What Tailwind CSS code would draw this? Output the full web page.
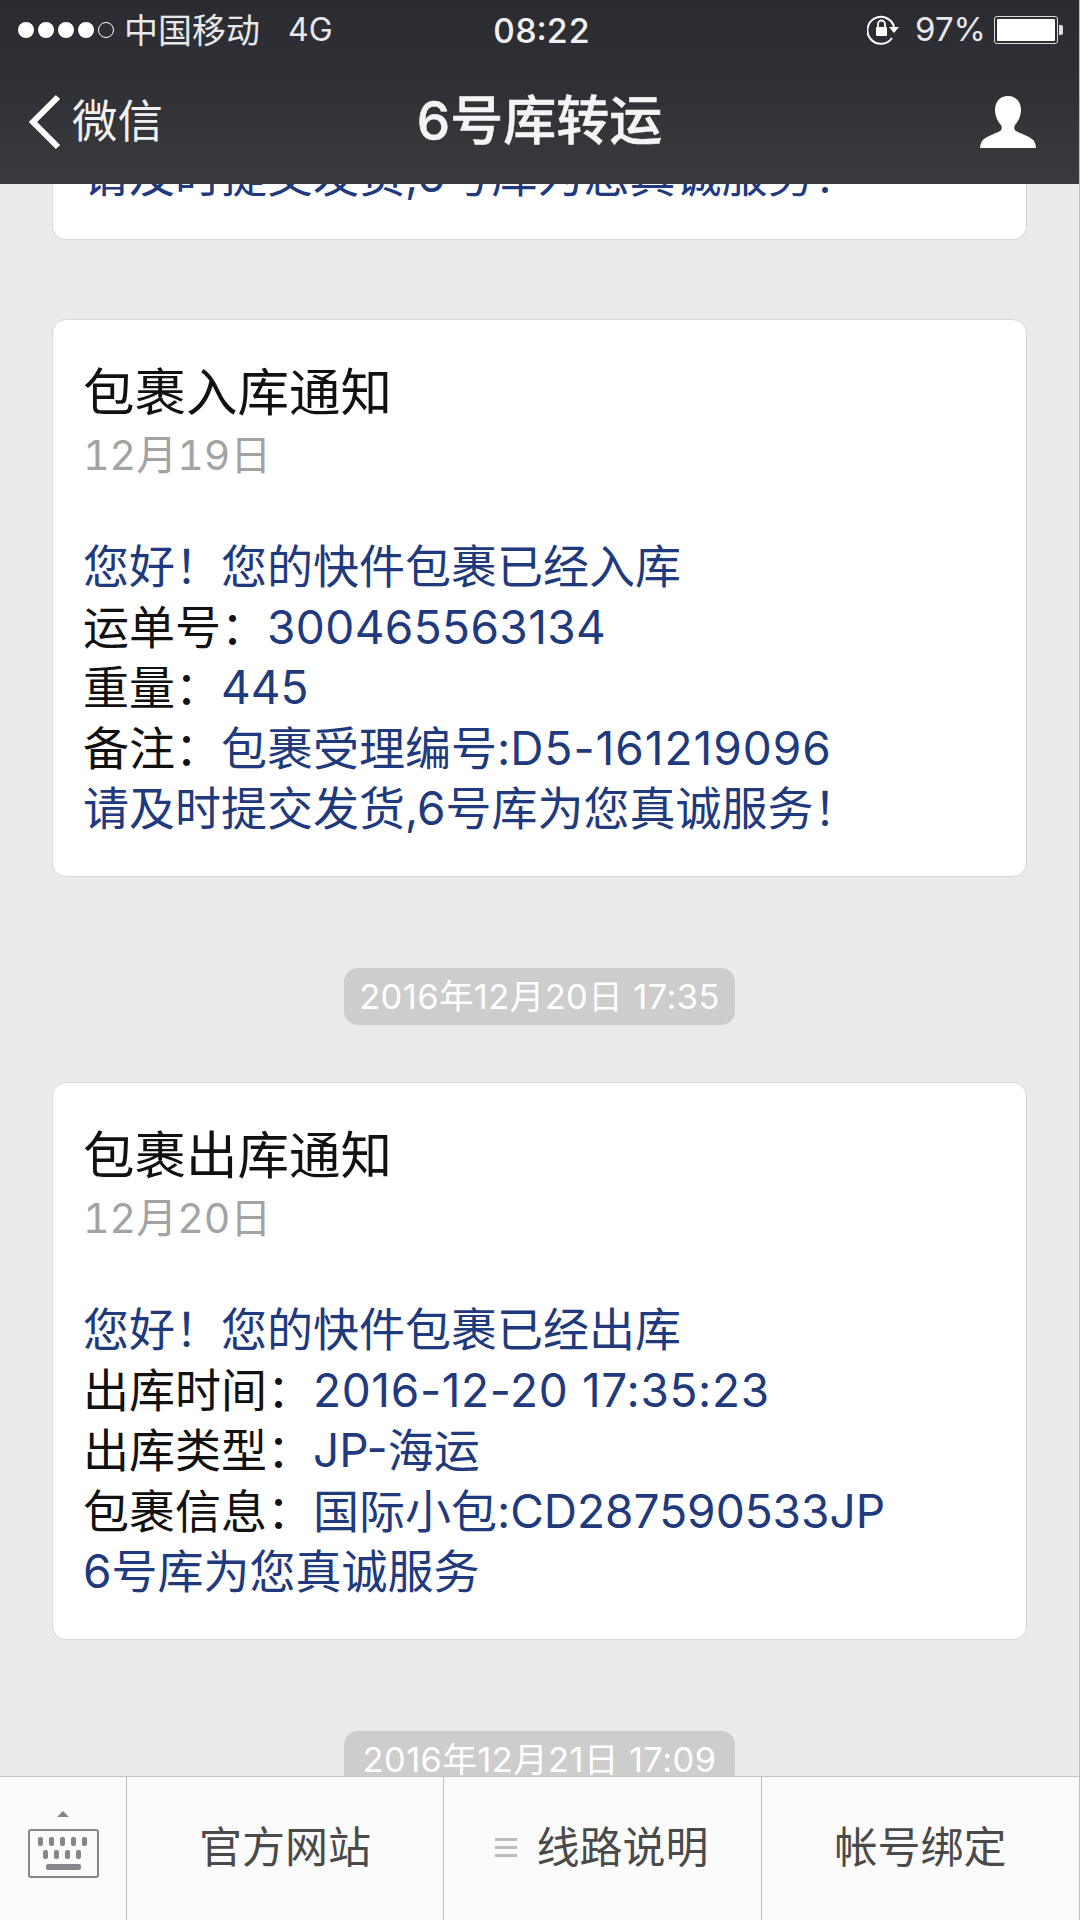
<!DOCTYPE html>
<html lang="zh-CN">
<head>
    <meta charset="UTF-8">
    <title>6号库转运</title>
    <script src="https://cdn.jsdelivr.net/npm/@tailwindcss/browser@4"></script>
</head>
<body class="bg-[#ebebeb] font-['Inter','Noto_Sans_CJK_SC',sans-serif]">
<div class="w-[1080px] h-[1920px] flex flex-col overflow-hidden border-r border-[#bdbdbd]">

    <!-- Status bar + nav -->
    <header class="h-[184px] shrink-0 bg-gradient-to-b from-[#2b2c31] via-[#303136] to-[#3a3a3e] text-white z-10 relative">
        <div class="h-[60px] flex items-center justify-between pl-[18px] pr-[16px]">
            <div class="flex items-center w-[420px] text-[34px] text-[#e8e8ea]">
                <div class="flex items-center gap-[4px]">
                    <span class="w-[16px] h-[16px] rounded-full bg-white"></span>
                    <span class="w-[16px] h-[16px] rounded-full bg-white"></span>
                    <span class="w-[16px] h-[16px] rounded-full bg-white"></span>
                    <span class="w-[16px] h-[16px] rounded-full bg-white"></span>
                    <span class="w-[16px] h-[16px] rounded-full border border-white"></span>
                </div>
                <span class="ml-[10px]">中国移动</span>
                <span class="ml-[28px] text-[32px]">4G</span>
            </div>
            <div class="text-[34px] font-medium tabular-nums text-[#f2f2f2] absolute left-[493px]">08:22</div>
            <div class="flex items-center text-[33px] text-[#e8e8ea]">
                <svg class="w-[34px] h-[32px]" viewBox="0 0 34 32" fill="none">
                    <path d="M25 24a13.500 13.500 0 1 1 2-11" stroke="#fff" stroke-width="2"/>
                    <path d="M22 13h10l-5 6z" fill="#fff"/>
                    <rect x="9" y="13" width="11" height="9" rx="1" fill="#fff"/>
                    <path d="M11 13v-3a3.500 3.500 0 0 1 7 0v3" stroke="#fff" stroke-width="1.800"/>
                </svg>
                <span class="ml-[14px]">97%</span>
                <div class="ml-[8px] w-[64px] h-[28px] border border-[#ddd] rounded-[3px] p-[2px]">
                    <div class="w-full h-full bg-white rounded-[1px]"></div>
                </div>
                <div class="w-[4px] h-[10px] bg-[#ddd] rounded-r-[2px] ml-[1px]"></div>
            </div>
        </div>
        <div class="h-[124px] flex items-center relative">
            <svg class="ml-[28px] w-[34px] h-[56px] shrink-0" viewBox="0 0 34 56" fill="none">
                <path d="M30 3 L5 28 L30 53" stroke="#fff" stroke-width="6"/>
            </svg>
            <span class="ml-[10px] text-[45.500px] leading-none text-[#f0f0f0]">微信</span>
            <div class="absolute left-0 right-0 top-[31px] text-center text-[53px] leading-[60px] font-medium [-webkit-text-stroke:0.5px_#f4f4f4] text-[#f4f4f4]">6号库转运</div>
            <svg class="absolute left-[980px] top-[35px] w-[56px] h-[54px]" viewBox="0 0 56 54" fill="#fff">
                <path d="M28 1c8 0 13 6 13 14 0 6-3 12-6 15-1 2-1 5 1 6 6 3 15 6 18 10 1 2 2 5 2 7H0c0-2 1-5 2-7 3-4 12-7 18-10 2-1 2-4 1-6-3-3-6-9-6-15C15 7 20 1 28 1z"/>
            </svg>
        </div>
    </header>

    <!-- Message list, scrolled so the first card is cut off by the nav -->
    <main class="flex-1 min-h-0 overflow-hidden px-[52px] pb-0 flex flex-col">
        <div class="w-[975px] h-[56px] shrink-0 bg-white border border-t-0 border-[#d8d8d8] rounded-b-[14px] px-[30px] overflow-hidden">
            <p class="-mt-[39px] text-[46px] leading-[60px] text-[#1f3a7d] whitespace-nowrap">请及时提交发货,6号库为您真诚服务！</p>
        </div>

        <section class="mt-[79px] w-[975px] h-[558px] shrink-0 bg-white border border-[#d8d8d8] rounded-[14px] px-[30px] pt-[40px]">
            <h2 class="text-[51.500px] leading-[64px] text-[#111]">包裹入库通知</h2>
            <p class="text-[41px] tabular-nums leading-[54px] mt-[4px] text-[#a3a3a3]">12月19日</p>
            <div class="mt-[54px] text-[46px] leading-[60.600px] text-[#1f3a7d] whitespace-nowrap">
                <p>您好！您的快件包裹已经入库</p>
                <p><span class="text-[#111]">运单号：</span><span class="tracking-[0.4px]">300465563134</span></p>
                <p><span class="text-[#111]">重量：</span>445</p>
                <p><span class="text-[#111]">备注：</span>包裹受理编号:<span class="tracking-[1px]">D5-161219096</span></p>
                <p>请及时提交发货,6号库为您真诚服务！</p>
            </div>
        </section>

        <div class="mt-[91px] self-center w-[391px] h-[57px] shrink-0 flex items-center justify-center rounded-[14px] bg-[#cdcdcd] text-[34.500px] tracking-[0.4px] text-white whitespace-nowrap">2016年12月20日 17:35</div>

        <section class="mt-[57px] w-[975px] h-[558px] shrink-0 bg-white border border-[#d8d8d8] rounded-[14px] px-[30px] pt-[40px]">
            <h2 class="text-[51.500px] leading-[64px] text-[#111]">包裹出库通知</h2>
            <p class="text-[41px] tabular-nums leading-[54px] mt-[4px] text-[#a3a3a3]">12月20日</p>
            <div class="mt-[54px] text-[46px] leading-[60.600px] text-[#1f3a7d] whitespace-nowrap">
                <p>您好！您的快件包裹已经出库</p>
                <p><span class="text-[#111]">出库时间：</span><span class="tracking-[0.65px]">2016-12-20 17:35:23</span></p>
                <p><span class="text-[#111]">出库类型：</span>JP-海运</p>
                <p><span class="text-[#111]">包裹信息：</span>国际小包:CD287590533JP</p>
                <p>6号库为您真诚服务</p>
            </div>
        </section>

        <div class="mt-[91px] self-center w-[391px] h-[57px] shrink-0 flex items-center justify-center rounded-[14px] bg-[#cdcdcd] text-[34.500px] tracking-[0.4px] text-white whitespace-nowrap">2016年12月21日 17:09</div>
    </main>

    <!-- Bottom menu -->
    <footer class="h-[144px] shrink-0 bg-[#fbfbfb] border-t border-[#c4c4c4] flex text-[43px] text-[#4a4a4a] z-10">
        <div class="w-[126px] shrink-0 flex flex-col items-center pt-[29px]">
            <svg class="w-[72px] h-[72px]" viewBox="0 0 72 72" fill="#85868c">
                <path d="M30 11l6-6 6 6z"/>
                <rect x="2" y="24" width="69" height="47" rx="2" fill="none" stroke="#85868c" stroke-width="2"/>
                <rect x="11" y="31" width="5" height="9" rx="2"/><rect x="22" y="31" width="5" height="9" rx="2"/><rect x="33" y="31" width="5" height="9" rx="2"/><rect x="44" y="31" width="5" height="9" rx="2"/><rect x="55" y="31" width="5" height="9" rx="2"/>
                <rect x="16" y="44" width="5" height="9" rx="2"/><rect x="27" y="44" width="5" height="9" rx="2"/><rect x="38" y="44" width="5" height="9" rx="2"/><rect x="49" y="44" width="5" height="9" rx="2"/>
                <rect x="19" y="58" width="35" height="6" rx="2"/>
            </svg>
        </div>
        <div class="w-[317px] shrink-0 border-l border-[#bdbdbd] flex items-center justify-center pb-[3px]">官方网站</div>
        <div class="w-[318px] shrink-0 border-l border-[#bdbdbd] flex items-center justify-center pb-[3px]">
            <span class="w-[22px] flex flex-col gap-[5px] mr-[20px] -ml-[2px]">
                <span class="h-[3px] bg-[#bcbcbc]"></span><span class="h-[3px] bg-[#bcbcbc]"></span><span class="h-[3px] bg-[#bcbcbc]"></span>
            </span>
            线路说明
        </div>
        <div class="flex-1 border-l border-[#bdbdbd] flex items-center justify-center pb-[3px]">帐号绑定</div>
    </footer>
</div>
</body>
</html>
